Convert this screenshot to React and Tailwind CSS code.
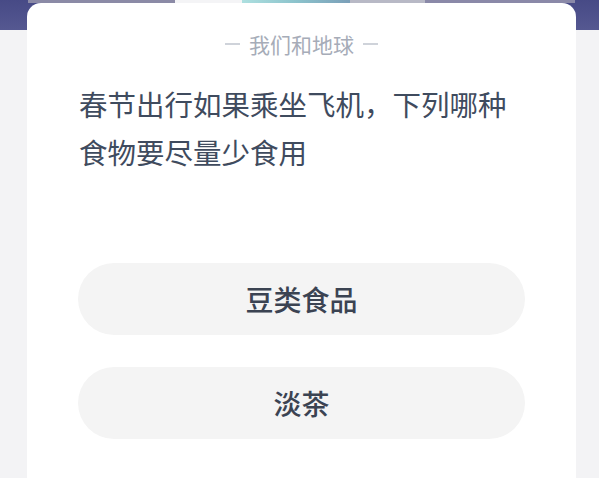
export default function App() {
  const font = { fontFamily: '"Noto Sans CJK SC", "Noto Sans", sans-serif' };
  return (
    <div className="w-[599px] h-[478px] overflow-hidden bg-[#f3f3f5]" style={font}>
      <div className="h-[30px] bg-gradient-to-b from-[#474a86] to-[#555891] flex flex-col">
        <div className="flex h-[3px] ml-[28px] w-[547px]">
          <div className="w-[147px] bg-[#8b8aa6]" />
          <div className="w-[67px] bg-[#f4f4f6]" />
          <div className="w-[108px] bg-gradient-to-r from-[#aee0e0] via-[#8cc3cc] to-[#7b9fb8]" />
          <div className="w-[75px] bg-[#b8b9c6]" />
          <div className="flex-1 bg-[#8a89a8]" />
        </div>
      </div>
      <div className="-mt-[27px] ml-[27px] w-[549px] h-[480px] rounded-t-[14px] bg-white flex flex-col">
        <div className="mt-[27px] flex items-center justify-center gap-[9px] text-[21px] leading-[28px] text-[#a6acb8]">
          <span className="w-[15px] h-[2px] bg-[#cfd3da]" />
          <span>我们和地球</span>
          <span className="w-[15px] h-[2px] bg-[#cfd3da]" />
        </div>
        <div className="mt-[22px] ml-[52px] text-[28.5px] leading-[48px] text-[#3f4b5e]">
          <div>春节出行如果乘坐飞机，下列哪种</div>
          <div>食物要尽量少食用</div>
        </div>
        <div className="mt-[87px] ml-[51px] w-[447px] flex flex-col gap-[32px]">
          <div className="h-[72px] rounded-full bg-[#f4f4f4] flex items-center justify-center text-[28px] font-medium text-[#3b4352]">
            豆类食品
          </div>
          <div className="h-[72px] rounded-full bg-[#f4f4f4] flex items-center justify-center text-[28px] font-medium text-[#3b4352]">
            淡茶
          </div>
        </div>
      </div>
    </div>
  );
}
